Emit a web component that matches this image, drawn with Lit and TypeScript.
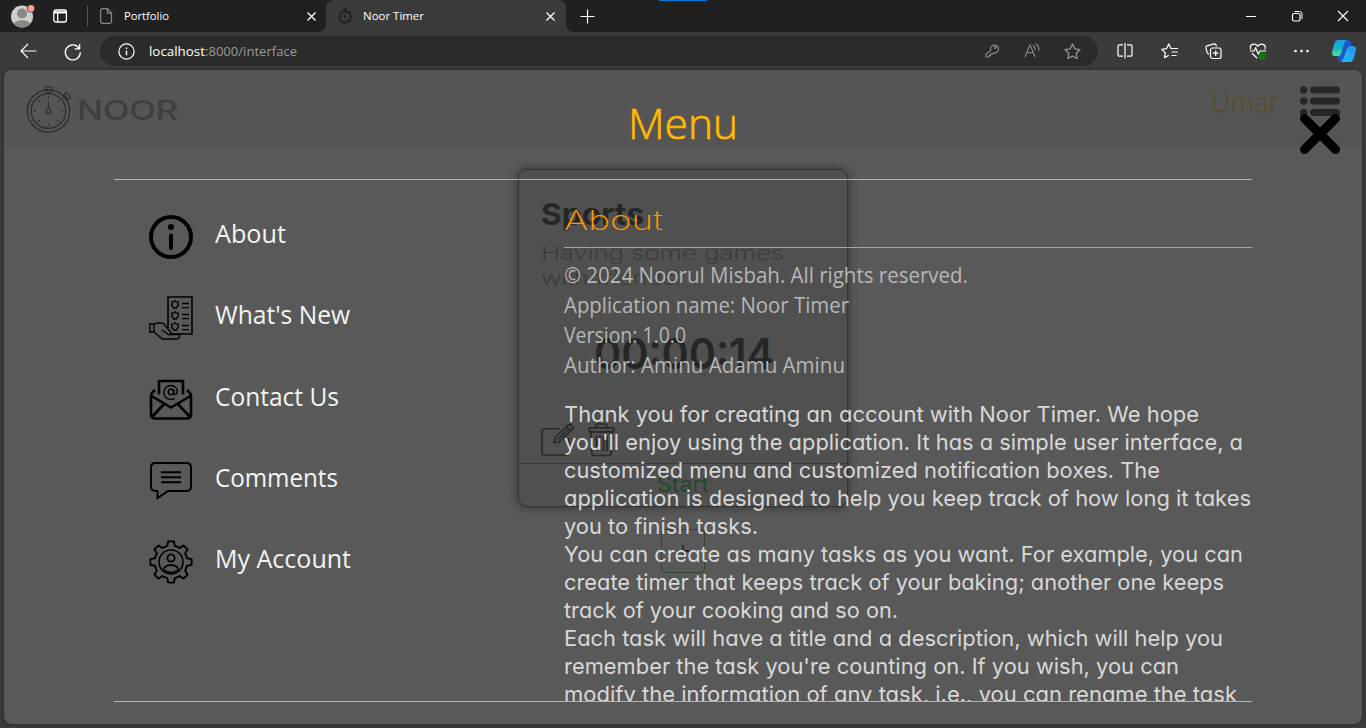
import { LitElement, html, css, svg } from "lit";
import { customElement, property } from "lit/decorators.js";

/** One line of text, condensed or extended to a set measure. */
@customElement("fit-line")
class FitLine extends LitElement {
  @property({ type: Number }) measure = 0;
  static styles = css`
    :host { display: block; white-space: nowrap; flex: none; }
    .run { display: inline-block; transform-origin: 0 50%; vertical-align: top; }
  `;
  firstUpdated() {
    const run = this.renderRoot.querySelector<HTMLElement>(".run")!;
    const w = run.getBoundingClientRect().width;
    this.style.width = this.measure + "px";
    if (w) run.style.transform = `scaleX(${this.measure / w})`;
  }
  render() {
    return html`<span class="run"><slot></slot></span>`;
  }
}

const fit = (text: string, measure: number, cls: string) =>
  html`<fit-line class=${cls} .measure=${measure}>${text}</fit-line>`;

const icon = (w: number, h: number, body: unknown, cls = "ico") =>
  html`<svg class=${cls} width=${w} height=${h} viewBox="0 0 ${w} ${h}">${body}</svg>`;

const closeSmall = svg`<path d="M1.500 1.500l8 8m0-8l-8 8" stroke-width="1.300"/>`;

const avatar = svg`<circle cx="12" cy="12.500" r="11" fill="#d0cecb" stroke="none"/>
  <circle cx="12" cy="9.500" r="5" fill="#8b8883" stroke="none"/>
  <path d="M4 20c1-5 15-5 16 0a11 11 0 0 1-16 0z" fill="#8b8883" stroke="none"/>
  <circle cx="21" cy="4.500" r="4" fill="#202020" stroke="none"/><circle cx="21" cy="4.500" r="3.400" fill="#ff9c93" stroke="none"/>`;
const workspace = svg`<rect x=".8" y="1" width="12.600" height="12" rx="2" stroke-width="1.300"/><path d="M1 2.800h12.400M1 3.800h12.400M4.700 4v9" stroke-width="1.300"/>`;
const filePage = svg`<path d="M2.500.7h5l4 4.300v8.500q0 1.800-1.800 1.800h-7.200q-1.800 0-1.800-1.800v-11q0-1.800 1.800-1.800zM7.300.8v4.400h4.200" stroke="#8a8a8a"/>`;
const watchSmall = svg`<circle cx="7" cy="9" r="5.600" stroke="#222" stroke-width="2"/><path d="M5 1.200h4M7 1.500v2.500M7 6.500v3.500M11.300 3.600l1.600 1.200" stroke="#222" stroke-width="2"/>`;
const back = svg`<path d="M16.500 8H1M8 1L1 8l7 7"/>`;
const reload = svg`<path d="M15.200 5.500a7.500 7.500 0 1 0 1.100 3.700M15.600 1v4.800h-5" stroke-width="1.300"/>`;
const info = svg`<circle cx="8.500" cy="8.500" r="7.600" stroke-width="1.200"/><path d="M8.500 7.600v4.600M8.500 4.600v1.500" stroke-width="1.400"/>`;
const key = svg`<path d="M5.800 7.400a4 4 0 1 1 2.700 2.500L7 11.200H5.600v1.500H4.200V14H1v-2.600z" stroke="#8b8b8b"/><circle cx="10.300" cy="4.600" r=".7" stroke="#8b8b8b"/>`;
const readAloud = svg`<path d="M1 14L5.800 2h.4L11 14M2.800 9.800h6.400M9 2.500q2.400 1.500 2 4.500M11.500.8q4 2.600 3.200 7.200" stroke="#8b8b8b" stroke-width="1.100"/>`;
const star = svg`<path d="M8.500 1l2.300 4.800 5.200.7-3.800 3.700.9 5.300-4.600-2.500-4.600 2.500.9-5.300L1 6.500l5.200-.7z" stroke="#9a9a9a" stroke-width="1.200" stroke-linejoin="round"/>`;
const split = svg`<path d="M6 1.800H2.200Q1 1.800 1 3v9q0 1.200 1.200 1.200H6M10 1.800h3.800Q15 1.800 15 3v9q0 1.200-1.200 1.200H10M8 0v15.500"/>`;
const favs = svg`<path d="M10.500 5.500H10L7.800 1 5.600 5.600.8 6.300l3.500 3.500-.8 4.900 4.300-2.300M10.500 5.500H17M10.500 9h6.300M10.500 12.500h5" stroke-linejoin="round"/>`;
const collections = svg`<path d="M4 11.200C3 11 2.300 10 2 9L.9 4.800Q.6 3.300 2 2.800L9 .9q1.600-.3 2 1l.4 1.600"/><rect x="5.500" y="5" width="10.500" height="10.500" rx="2"/><path d="M10.700 7.500v5.500M8 10.200h5.500"/>`;
const heart = svg`<path d="M1.700 6.500C0 1 6-.5 8.800 3.200 11.500-.5 17.500 1 16 6.500M1 8h4l1.700-3 2.600 6 1.600-3H17M3 10.200l5.200 5"/><circle cx="13" cy="13" r="3.700" fill="#107c10" stroke="none"/><path d="M11.500 13l1 1 2-2" stroke="#063" stroke-width=".8"/>`;
const dots = svg`<g fill="#fff" stroke="none"><circle cx="1.500" cy="2" r="1.300"/><circle cx="7.500" cy="2" r="1.300"/><circle cx="13.500" cy="2" r="1.300"/></g>`;
const copilot = svg`<defs>
  <linearGradient id="ca" x1="0" y1="0" x2="0" y2="1"><stop offset="0" stop-color="#1a9be8"/><stop offset=".5" stop-color="#12b5c8"/><stop offset="1" stop-color="#5fe08c"/></linearGradient>
  <linearGradient id="cb" x1="0" y1="1" x2="1" y2="0"><stop offset="0" stop-color="#18c8f0"/><stop offset="1" stop-color="#2f8cf5"/></linearGradient></defs>
  <g stroke="none"><path d="M6.500 0H16q2 0 2.700 2.500l1 3H17q-2 0-2.700 2L11 20q-.8 2-3 2-1.500-1-2-3.500L5 16z" fill="#1559d6"/>
  <path d="M6 0h9q-2 .5-2.800 3L9 14q-.7 2-2.800 2H3q-3.500 0-3-4L2.500 3Q3.500 0 6 0z" fill="url(#ca)"/>
  <path d="M18 6h3q3.500 0 3 4l-2.500 9q-1 3-3.500 3H8q2.300 0 3-2.500L14.800 8.500Q15.500 6 18 6z" fill="url(#cb)"/></g>`;

const ticks = [0, 45, 90, 135, 180, 225, 270, 315].map(
  (a) => svg`<path d="M22.500 10v2.500" transform="rotate(${a} 22.500 25)"/>`
);
const stopwatch = svg`<g stroke="#2c2c2c" stroke-width="1.200">
  <circle cx="22.500" cy="25" r="21.200"/><circle cx="22.500" cy="25" r="17.300"/>${ticks}
  <rect x="18.800" y="1" width="7.600" height="3.200" rx="1"/><path d="M20.500 4.400V7h4V4.400M22.500 15.500v7"/>
  <circle cx="22.500" cy="25" r="2.300"/><rect x="38" y="8" width="6.500" height="3.500" rx="1" transform="rotate(42 41 10)"/><path d="M37 12.500l2.200-2.200M39.300 14l2-2"/></g>`;
const list = svg`<g fill="#262626" stroke="none">${[4, 15, 26.5].map(
  (y) => svg`<circle cx="3.700" cy=${y} r="3.700"/><rect x="10" y=${y - 3.5} width="30" height="7" rx="3.500"/>`
)}</g>`;
const bigClose = svg`<path d="M4.500 4.500l31 31m0-31l-31 31" stroke="#000" stroke-width="9" stroke-linecap="round"/>`;
const edit = svg`<g stroke="#292929" stroke-width="1.600" stroke-linejoin="round"><path d="M19 5.800H4Q1 5.800 1 8.800v20.700q0 2.500 2.500 2.500h22q2.500 0 2.500-2.500V15"/><path d="M13 20l1.300-5.700L27.500 1.800q1-1 2.300 0l1.800 1.800q1 1.200 0 2.300L18.300 18.700zM25.500 3.800l4 4M16.500 16.500L27.500 6"/></g>`;
const trash = svg`<g stroke="#292929" stroke-width="1.700"><rect x="1" y="4.800" width="25" height="4" rx="1.500"/><path d="M8 4.500V3q0-2 2-2h7q2 0 2 2v1.500M3 9l.7 21q.2 2.500 2.500 2.500h14.600q2.300 0 2.500-2.500L24 9M8.500 12.500v15.500M12 12.500v15.500M15.500 12.500v15.500M19 12.500v15.500"/></g>`;

const pentagon = (y: number) =>
  svg`<path d="M26 ${y - 4.2}l1.300 1 2 .3-.5 1.900.6 1.600-1.500 1-.4 1.400h-3l-.4-1.400-1.500-1 .6-1.600-.5-1.900 2-.3zM33 ${y - 1.5}h7M33 ${y + 2.7}h7" stroke-width="1.300"/>`;

const gearPath = (() => {
  const pts: string[] = [];
  for (let i = 0; i < 8; i++) {
    const at = (deg: number, r: number) => {
      const a = ((i * 45 + deg - 90) * Math.PI) / 180;
      return `${(22 + r * Math.cos(a)).toFixed(2)} ${(22 + r * Math.sin(a)).toFixed(2)}`;
    };
    pts.push(at(-13, 16.6), at(-8, 20.8), at(8, 20.8), at(13, 16.6));
  }
  return "M" + pts.join("L") + "Z";
})();

const items = [
  { label: "About", w: 71, art: svg`<circle cx="22" cy="22" r="20" stroke-width="4"/><circle cx="22" cy="12" r="3" fill="#000" stroke="none"/><path d="M22 20.500v12.500" stroke-width="4" stroke-linecap="round"/>` },
  { label: "What's New", w: 135, art: svg`<path d="M19 32V1h24v37H22" stroke-width="1.600"/>${pentagon(9)}${pentagon(20)}${pentagon(31)}
      <path d="M.8 28H5v8H.8zM5 28.500c4-3 8-1.500 10-.5l6.500 8c1.500 2-.5 3.500-2 2.500l-6.500-4.500M5 36l8.500 7H27q3.500 0 3.500-3v-1.500H20" stroke-width="1.400"/>` },
  { label: "Contact Us", w: 124, art: svg`<g transform="translate(0 2)"><path d="M10 15.500V2h24v13.500" stroke-width="2.600"/><path d="M6 11q-4 3-4 6v18q0 4.500 4.500 4.500h31q4.500 0 4.500-4.500V17q0-3-4-6M2.500 17L22 28.500 41.500 17M3 38l12-13M41 38L29 25" stroke-width="2.600"/>
      <circle cx="22" cy="13" r="2.700" stroke-width="1.500"/><path d="M24.700 10v4.500q1 2.200 3 .2 1.500-3.500-1-6.300a7 7 0 1 0-.8 10.800" stroke-width="1.400"/></g>` },
  { label: "Comments", w: 123, art: svg`<g transform="translate(0 1)"><path d="M6.500 4h31q4.500 0 4.500 4.500v19q0 4.500-4.500 4.500H19L8.500 39.300V32H6.500Q2 32 2 27.500v-19Q2 4 6.500 4z" stroke-width="1.900"/><path d="M12 13.300h20M12 18.300h20M12 23.300h20" stroke-width="1.900"/></g>` },
  { label: "My Account", w: 136, art: svg`<path d=${gearPath} stroke-width="1.900" stroke-linejoin="round"/><circle cx="22" cy="22" r="12" stroke-width="1.600"/><circle cx="22" cy="18" r="3.600" stroke-width="1.900"/><path d="M14.500 30c1-6.500 14-6.500 15 0q-7.500 5-15 0z" stroke-width="1.600"/>` },
];

const facts: [string, number][] = [
  ["© 2024 Noorul Misbah. All rights reserved.", 404],
  ["Application name: Noor Timer", 285],
  ["Version: 1.0.0", 122],
  ["Author: Aminu Adamu Aminu", 281],
];
const story: [string, number][] = [
  ["Thank you for creating an account with Noor Timer. We hope", 635],
  ["you'll enjoy using the application. It has a simple user interface, a", 679],
  ["customized menu and customized notification boxes. The", 596],
  ["application is designed to help you keep track of how long it takes", 687],
  ["you to finish tasks.", 194],
  ["You can create as many tasks as you want. For example, you can", 679],
  ["create timer that keeps track of your baking; another one keeps", 660],
  ["track of your cooking and so on.", 334],
  ["Each task will have a title and a description, which will help you", 659],
  ["remember the task you're counting on. If you wish, you can", 615],
  ["modify the information of any task, i.e., you can rename the task", 673],
];

@customElement("app-root")
class AppRoot extends LitElement {
  static styles = css`
    :host { display: block; width: 1366px; height: 728px; overflow: hidden; background: #3b3b3b; font-family: "Open Sans", "Noto Sans", sans-serif; color: #fff; }
    * { box-sizing: border-box; }
    svg { display: block; flex: none; fill: none; stroke: #fff; stroke-width: 1.2; overflow: visible; }
    .strip { display: flex; height: 32px; position: relative; }
    .strip::after { content: ""; position: absolute; left: 659px; top: 0; width: 48px; height: 1px; background: #0078d7; }
    .dark { background: #202020; display: flex; align-items: center; }
    .left { width: 326px; border-bottom-right-radius: 8px; padding-left: 10px; }
    .left .wk { margin-left: 19px; }
    .rule { width: 1px; height: 20px; background: #565656; margin: 0 12px 0 20px; }
    .tabname { font-size: 11.5px; line-height: 32px; margin-left: 12px; }
    .shut { margin-left: auto; margin-right: 9px; }
    .tabwrap { width: 240px; background: linear-gradient(#202020 50%, #3b3b3b 50%); }
    .tab { height: 32px; background: #3b3b3b; border-radius: 8px 8px 0 0; display: flex; align-items: center; padding-left: 12px; }
    .tab .tabname { margin-left: 11px; }
    .tab .shut { margin-right: 10px; }
    .right { flex: 1; border-bottom-left-radius: 8px; padding-left: 14px; }
    .wins { margin-left: auto; display: flex; }
    .cell { width: 46px; height: 32px; display: grid; place-items: center; }
    .bar { height: 38px; display: flex; align-items: center; padding-left: 6px; }
    .bcell { width: 44px; display: grid; place-items: center; flex: none; }
    .pill { height: 30px; width: 998px; margin: 0 5px 0 6px; border-radius: 15px; background: #2b2b2b; display: flex; align-items: center; padding: 0 17px 0 17.5px; }
    .url { font-size: 13px; line-height: 30px; }
    .host { margin-left: 14.5px; }
    .path { color: #9a9a9a; }
    .pill .tools { margin-left: auto; display: flex; width: 96px; justify-content: space-between; }
    .cop { margin-left: 9px; }

    .view { position: relative; margin: 0 4px; height: 654px; border-radius: 8px; overflow: hidden; background: #595959; box-shadow: 0 0 3px #222; font-family: Inter, sans-serif; }
    .head { height: 77px; background: #555; display: flex; padding: 16px 22px 0; }
    .noor { font-size: 27px; line-height: 28px; font-weight: 550; color: #3f3f3f; margin: 10.5px 0 0 6px; }
    .user { font: 300 28px/36px "Open Sans", sans-serif; color: #5c4b28; -webkit-text-stroke: .4px #5c4b28; margin: -3px 21px 0 auto; }
    .card { width: 330px; height: 338px; margin: 22px 0 0 514px; border: 1px solid #343434; border-radius: 9px; background: #505050; box-shadow: 0 0 9px #2e2e2e; display: flex; flex-direction: column; padding-left: 22px; }
    .sports { font-size: 30px; line-height: 32px; font-weight: 700; color: #262626; margin-top: 28px; }
    .desc { font-size: 19px; line-height: 25px; font-weight: 200; color: #363636; }
    .desc1 { margin-top: 11px; }
    .time { font-size: 43px; line-height: 50px; font-weight: 600; color: #262626; margin: 37px 0 0 53px; }
    .acts { display: flex; gap: 15px; margin-top: 45px; height: 40px; }
    .start { border-top: 1px solid #2e422e; margin-left: -22px; padding: 7px 0 0 138px; }
    .go { font-size: 21px; line-height: 28px; color: #244826; }
    .add { width: 44px; height: 44px; margin: 22px 0 0 657px; border: 1px solid #2b482c; border-radius: 4px; display: grid; place-items: center; }

    .menu { position: absolute; inset: 0; padding: 0 110px; }
    .x { position: absolute; left: 1296px; top: 44px; }
    .title { font: 300 43px/60px "Open Sans", sans-serif; color: #ffb900; -webkit-text-stroke: .7px #ffb900; margin: 23px auto 0; }
    .panes { margin-top: 26px; height: 523px; border: solid #f0b21c; border-width: 1px 0; display: flex; overflow: hidden; }
    .nav { width: 450px; padding: 16px 0 0 35px; flex: none; }
    .item { height: 81.25px; display: flex; align-items: center; gap: 22px; }
    .item svg { stroke: #000; }
    .label { font: 400 25px/34px "Open Sans", sans-serif; color: #f4f4f4; margin-top: -7px; }
    .text { flex: 1; }
    .about { font-size: 27.5px; line-height: 40px; font-weight: 200; color: #ff9800; margin-top: 20px; }
    .hr { height: 1px; background: #f09a18; margin: 7px 0 11px; }
    .fact { font: 400 22px/30px "Open Sans", sans-serif; color: #b6b6b6; }
    .story { margin-top: 21px; }
    .line { font-size: 22px; line-height: 28px; font-weight: 400; color: #d8d8d8; font-feature-settings: "cv11"; }
  `;

  render() {
    return html`
      <div class="strip">
        <div class="dark left">
          ${icon(24, 25, avatar)}${icon(14, 14, workspace, "wk")}
          <span class="rule"></span>${icon(12, 16, filePage)}
          ${fit("Portfolio", 45, "tabname")}${icon(11, 11, closeSmall, "shut")}
        </div>
        <div class="tabwrap"><div class="tab">
          ${icon(14, 16, watchSmall)}${fit("Noor Timer", 61, "tabname")}${icon(11, 11, closeSmall, "shut")}
        </div></div>
        <div class="dark right">
          ${icon(15, 15, svg`<path d="M7.500 .5v14M.5 7.500h14"/>`)}
          <div class="wins">
            <span class="cell">${icon(10, 10, svg`<path d="M0 5.500h10" stroke-width="1"/>`)}</span>
            <span class="cell">${icon(10, 10, svg`<rect x=".5" y="2.500" width="7.500" height="7.500" rx="1.500"/><path d="M2.500 .5h5q2.500 0 2.500 2.500v5" stroke-width="1"/>`)}</span>
            <span class="cell">${icon(10, 10, svg`<path d="M0 0l10 10m0-10L0 10"/>`)}</span>
          </div>
        </div>
      </div>
      <div class="bar">
        <span class="bcell">${icon(16, 16, back)}</span>
        <span class="bcell">${icon(17, 17, reload)}</span>
        <div class="pill">
          ${icon(17, 17, info)}
          ${fit("localhost", 56, "url host")}${fit(":8000/interface", 92, "url path")}
          <div class="tools">${icon(15, 15, key)}${icon(16, 15, readAloud)}${icon(17, 16, star)}</div>
        </div>
        <span class="bcell">${icon(16, 16, split)}</span>
        <span class="bcell">${icon(17, 16, favs)}</span>
        <span class="bcell">${icon(17, 17, collections)}</span>
        <span class="bcell">${icon(17, 17, heart)}</span>
        <span class="bcell">${icon(15, 4, dots)}</span>
        ${icon(24, 22, copilot, "cop")}
      </div>
      <div class="view">
        <div class="head">
          ${icon(45, 47, stopwatch)}${fit("NOOR", 101, "noor")}
          ${fit("Umar", 68, "user")}${icon(40, 30, list)}
        </div>
        <div class="card">
          ${fit("Sports", 103, "sports")}
          ${fit("Having some games", 243, "desc desc1")}
          ${fit("with friends.", 141, "desc")}
          ${fit("00:00:14", 180, "time")}
          <div class="acts">${icon(32, 33, edit)}${icon(27, 33, trash)}</div>
          <div class="start">${fit("Start", 52, "go")}</div>
        </div>
        <div class="add">${icon(12, 12, svg`<path d="M6 0v12M0 6h12" stroke="#292929" stroke-width="1.800"/>`)}</div>
        <div class="menu">
          <span class="x">${icon(40, 40, bigClose)}</span>
          ${fit("Menu", 110, "title")}
          <div class="panes">
            <nav class="nav">
              ${items.map((i) => html`<div class="item">${icon(44, 44, i.art)}${fit(i.label, i.w, "label")}</div>`)}
            </nav>
            <div class="text">
              ${fit("About", 99, "about")}
              <div class="hr"></div>
              ${facts.map(([t, w]) => fit(t, w, "fact"))}
              <div class="story">${story.map(([t, w]) => fit(t, w, "line"))}</div>
            </div>
          </div>
        </div>
      </div>
    `;
  }
}
